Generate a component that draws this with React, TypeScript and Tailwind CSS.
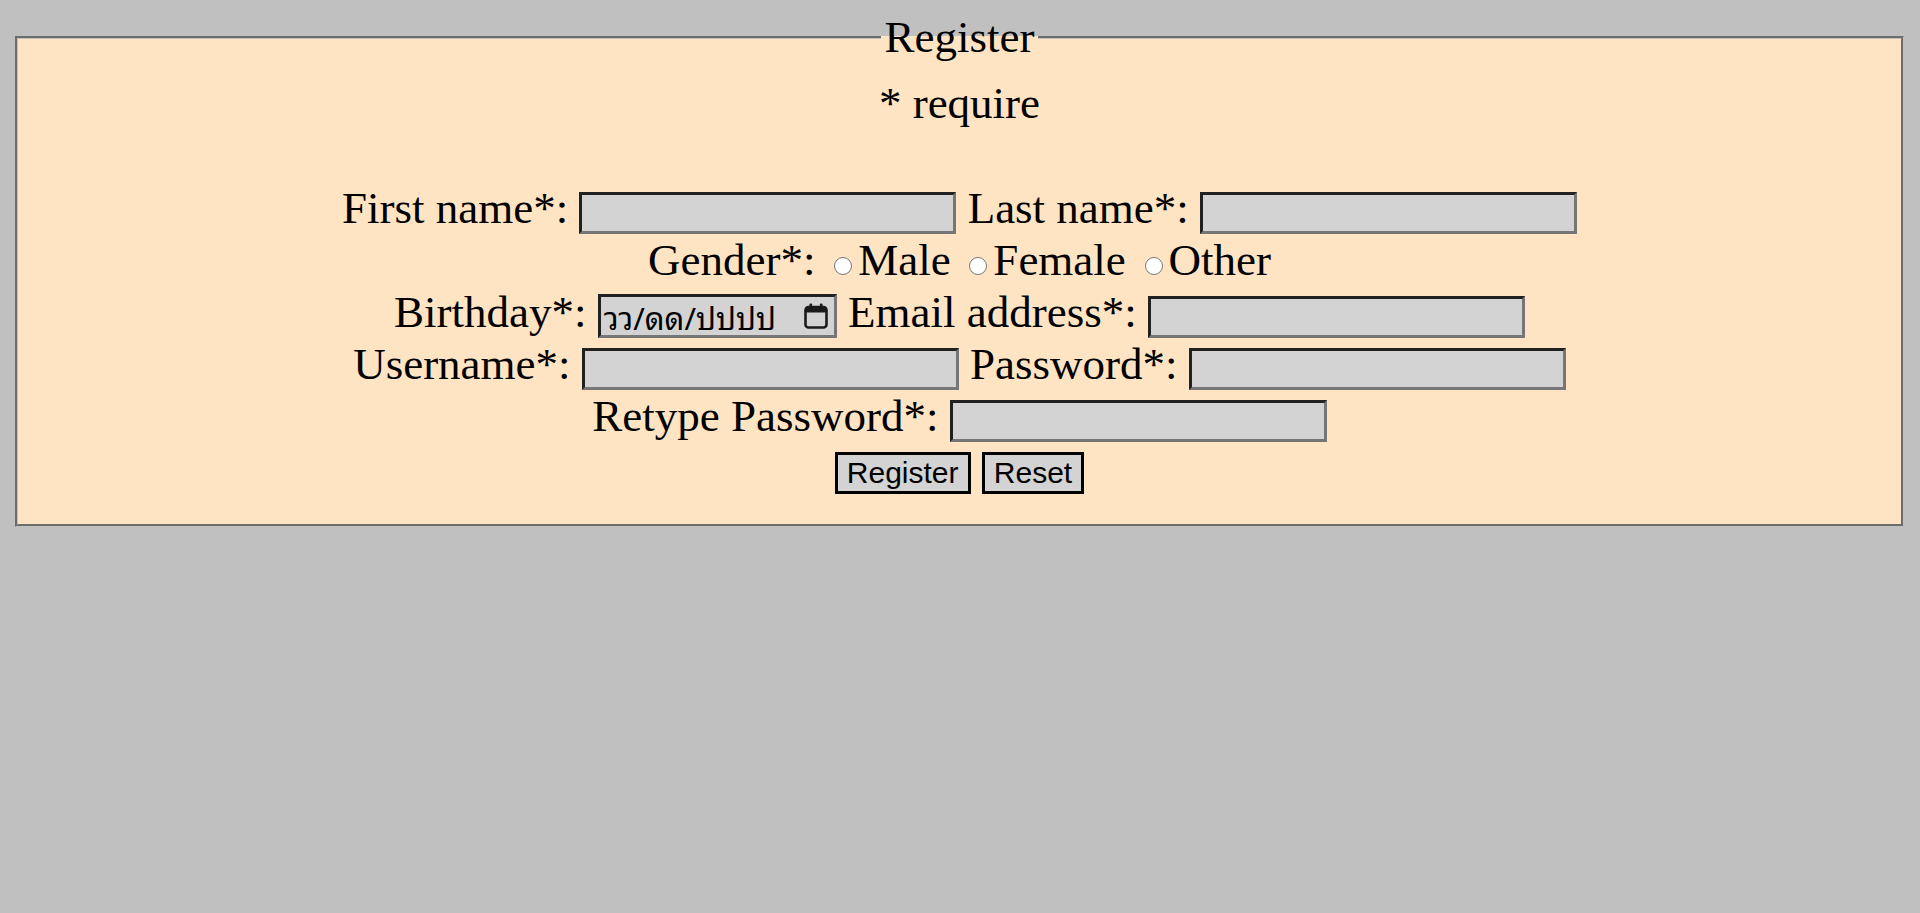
import React from "react";

const serif = "[font-family:'Liberation_Serif','Times_New_Roman',serif]";
const textInput =
  "w-[377px] h-[42px] border-[3px] [border-style:inset] border-[#767676] bg-[#d3d3d3] px-[3px] text-[30px] [font-family:'Liberation_Sans',Arial,sans-serif] align-baseline outline-none";
const button =
  "h-[42px] px-[9px] border-[3px] border-solid border-black bg-[#d3d3d3] text-[30px] leading-[normal] text-black [font-family:'Liberation_Sans',Arial,sans-serif] align-baseline";
const radio =
  "appearance-none inline-block w-[18px] h-[18px] rounded-full border-[1.5px] border-solid border-[#767676] bg-white ml-[7.5px] mr-[6px] align-baseline";

function CalendarIcon() {
  return (
    <svg width="24" height="26" viewBox="0 0 24 26" className="block shrink-0">
      <rect x="1.5" y="4" width="21" height="20.5" rx="3" fill="none" stroke="#1a1a1a" strokeWidth="2.6" />
      <rect x="1.5" y="4" width="21" height="5.5" rx="2" fill="#1a1a1a" />
      <rect x="5.5" y="0.5" width="2.6" height="5" rx="1" fill="#1a1a1a" />
      <rect x="15.9" y="0.5" width="2.6" height="5" rx="1" fill="#1a1a1a" />
    </svg>
  );
}

function DateInput() {
  return (
    <span className="inline-flex items-center justify-between w-[239px] h-[44px] border-[3px] [border-style:inset] border-[#767676] bg-[#d3d3d3] pl-[3px] pr-[6px] align-[-3px]">
      <span className="text-[31px] leading-[38px] text-black whitespace-nowrap [font-family:'Noto_Sans_Thai_Looped','Noto_Sans_Thai','Noto_Sans_Thai_UI','DejaVu_Sans_Mono',monospace]">
        วว/ดด/ปปปป
      </span>
      <CalendarIcon />
    </span>
  );
}

export default function App() {
  return (
    <div className={`min-h-screen bg-[#c0c0c0] pt-[11px] pl-[15px] pr-[16px] pb-[1px] ${serif}`}>
      <form onSubmit={(e) => e.preventDefault()}>
        <fieldset className="border-[3px] [border-style:groove] border-[#c0c0c0] bg-[#ffe4c4] px-[18px] pt-[14px] pb-[30px] text-center text-[45px] leading-[normal] text-black">
          <legend className="mx-auto px-[4px]">Register</legend>
          <p>* require</p>
          <div className="mt-[53px]">
            <div>
              First name*: <input type="text" className={textInput} /> Last name*:{" "}
              <input type="text" className={textInput} />
            </div>
            <div>
              Gender*: <input type="radio" name="gender" className={radio} />
              Male <input type="radio" name="gender" className={radio} />
              Female <input type="radio" name="gender" className={radio} />
              Other
            </div>
            <div>
              Birthday*: <DateInput /> Email address*:{" "}
              <input type="email" className={textInput} />
            </div>
            <div>
              Username*: <input type="text" className={textInput} /> Password*:{" "}
              <input type="password" className={textInput} />
            </div>
            <div>
              Retype Password*: <input type="password" className={textInput} />
            </div>
            <div>
              <button type="submit" className={button}>
                Register
              </button>{" "}
              <button type="reset" className={button}>
                Reset
              </button>
            </div>
          </div>
        </fieldset>
      </form>
    </div>
  );
}
